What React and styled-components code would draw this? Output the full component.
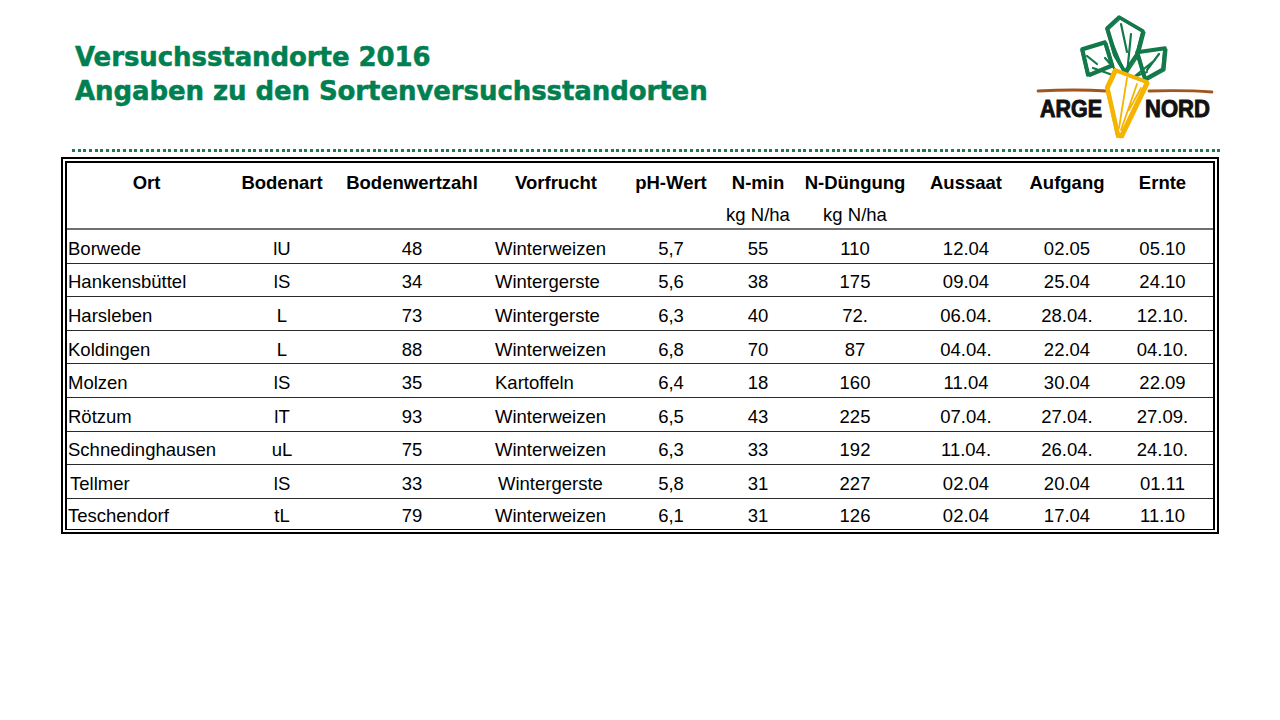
import React from 'react';
import styled, { createGlobalStyle } from 'styled-components';

const GlobalStyle = createGlobalStyle`
  html, body {
    margin: 0;
    padding: 0;
    background: #ffffff;
  }
  * {
    box-sizing: border-box;
  }
`;

const Slide = styled.div`
  width: 1280px;
  height: 720px;
  background: #ffffff;
  font-family: "Liberation Sans", Arial, sans-serif;
  color: #000;
  overflow: hidden;
`;

const Header = styled.div`
  display: flex;
  justify-content: space-between;
  align-items: flex-start;
  height: 149px;
`;

const Title = styled.h1`
  margin: 40px 0 0 75px;
  font-family: "DejaVu Sans", Verdana, sans-serif;
  font-weight: bold;
  font-size: 26px;
  line-height: 34px;
  letter-spacing: -0.08px;
  color: #008050;
  -webkit-text-stroke: 0.5px #008050;
`;

const LogoBox = styled.div`
  margin: 12px 65px 0 0;
  width: 180px;
  height: 130px;
`;

const Divider = styled.div`
  margin-left: 72px;
  width: 1148px;
  height: 3px;
  background: repeating-linear-gradient(to right, #1f7a4c 0 3px, transparent 3px 5.67px);
`;

const Frame = styled.div`
  margin: 5px 0 0 61px;
  width: 1158px;
  border: 2px solid #000;
  padding: 2px;
`;

const Inner = styled.div`
  border: 2px solid #000;
  border-bottom-width: 1px;
`;

const cols = '159px 112px 148px 140px 90px 84px 110px 112px 90px 101px';

const HeadGrid = styled.div`
  display: grid;
  grid-template-columns: ${cols};
  grid-template-rows: 33px 32px;
  height: 67px;
  border-bottom: 2px solid #6f6f6f;
`;

const HeadCell = styled.div`
  display: flex;
  align-items: center;
  justify-content: center;
  padding-top: 6px;
  font-size: 18.5px;
  font-weight: ${(p) => (p.$sub ? 'normal' : 'bold')};
  white-space: nowrap;
`;

const Row = styled.div`
  display: grid;
  grid-template-columns: ${cols};
  height: ${(p) => (p.$last ? '30px' : '33.6px')};
  border-bottom: ${(p) => (p.$last ? 'none' : '1px solid #2a2a2a')};
`;

const Cell = styled.div`
  display: flex;
  align-items: center;
  justify-content: ${(p) => (p.$align === 'left' ? 'flex-start' : 'center')};
  padding-left: ${(p) => p.$pad || 0}px;
  padding-top: 5px;
  font-size: 18.5px;
  white-space: nowrap;
`;

const headers = ['Ort', 'Bodenart', 'Bodenwertzahl', 'Vorfrucht', 'pH-Wert', 'N-min', 'N-Düngung', 'Aussaat', 'Aufgang', 'Ernte'];
const subHeaders = ['', '', '', '', '', 'kg N/ha', 'kg N/ha', '', '', ''];

const rows = [
  ['Borwede', 'lU', '48', 'Winterweizen', '5,7', '55', '110', '12.04', '02.05', '05.10'],
  ['Hankensbüttel', 'lS', '34', 'Wintergerste', '5,6', '38', '175', '09.04', '25.04', '24.10'],
  ['Harsleben', 'L', '73', 'Wintergerste', '6,3', '40', '72.', '06.04.', '28.04.', '12.10.'],
  ['Koldingen', 'L', '88', 'Winterweizen', '6,8', '70', '87', '04.04.', '22.04', '04.10.'],
  ['Molzen', 'lS', '35', 'Kartoffeln', '6,4', '18', '160', '11.04', '30.04', '22.09'],
  ['Rötzum', 'lT', '93', 'Winterweizen', '6,5', '43', '225', '07.04.', '27.04.', '27.09.'],
  ['Schnedinghausen', 'uL', '75', 'Winterweizen', '6,3', '33', '192', '11.04.', '26.04.', '24.10.'],
  [' Tellmer', 'lS', '33', ' Wintergerste', '5,8', '31', '227', '02.04', '20.04', '01.11'],
  ['Teschendorf', 'tL', '79', 'Winterweizen', '6,1', '31', '126', '02.04', '17.04', '11.10'],
];

const GREEN = '#13794a';
const YELLOW = '#f4b400';

// sketchy outline: one heavy stroke plus a lighter offset one
const Sketch = ({ points, color, w = 3.4 }) => (
  <g fill="none" stroke={color} strokeLinejoin="round" strokeLinecap="round">
    <polygon points={points} strokeWidth={w} />
    <polygon points={points} strokeWidth={w * 0.45} transform="translate(1.8 1.3)" />
    <polygon points={points} strokeWidth={w * 0.35} transform="translate(-1.2 0.8)" />
  </g>
);

const Logo = () => (
  <svg width="180" height="130" viewBox="0 0 180 130">
    {/* leaves */}
    <Sketch points="47,37 70,30 77,53 53,63" color={GREEN} />
    <Sketch points="72,16 84,5 108,19 102,42 90,60 80,43" color={GREEN} />
    <Sketch points="102,40 130,36 128,57 110,67" color={GREEN} />
    <path
      d="M58,56 L86,66 M70,46 L86,64 M76,28 L90,62 M96,22 L92,62 M86,12 L92,40 M112,60 L96,66 M120,48 L100,64 M124,42 L112,58 M52,44 L62,52"
      stroke={GREEN} strokeWidth="2.2" fill="none" strokeLinecap="round"
    />
    {/* soil line */}
    <path d="M3,79 Q40,77 72,79" stroke="#a0561c" strokeWidth="2.8" fill="none" strokeLinecap="round" />
    <path d="M114,79 Q150,78 177,80" stroke="#a0561c" strokeWidth="2.8" fill="none" strokeLinecap="round" />
    {/* carrot */}
    <polygon points="80,58 112,70 86,124 72,75" fill="#fff" />
    <Sketch points="80,58 112,70 86,124 83,124 72,75" color={YELLOW} w={4} />
    <path d="M92,66 L84,116 M102,72 L86,118 M106,76 L94,98" stroke={YELLOW} strokeWidth="1.8" fill="none" strokeLinecap="round" />
    {/* text */}
    <text x="5" y="105" fontFamily="Liberation Sans, Arial, sans-serif" fontWeight="bold" fontSize="23"
      textLength="62" lengthAdjust="spacingAndGlyphs" fill="#111" stroke="#111" strokeWidth="0.9">ARGE</text>
    <text x="110" y="105" fontFamily="Liberation Sans, Arial, sans-serif" fontWeight="bold" fontSize="23"
      textLength="65" lengthAdjust="spacingAndGlyphs" fill="#111" stroke="#111" strokeWidth="0.9">NORD</text>
  </svg>
);

export default function App() {
  return (
    <Slide>
      <GlobalStyle />
      <Header>
        <Title>
          Versuchsstandorte 2016
          <br />
          Angaben zu den Sortenversuchsstandorten
        </Title>
        <LogoBox>
          <Logo />
        </LogoBox>
      </Header>
      <Divider />
      <Frame>
        <Inner>
          <HeadGrid>
            {headers.map((h) => (
              <HeadCell key={h}>{h}</HeadCell>
            ))}
            {subHeaders.map((h, i) => (
              <HeadCell key={i} $sub>{h}</HeadCell>
            ))}
          </HeadGrid>
          {rows.map((r, ri) => (
            <Row key={r[0]} $last={ri === rows.length - 1}>
              {r.map((v, ci) => (
                <Cell
                  key={ci}
                  $align={ci === 0 || ci === 3 ? 'left' : 'center'}
                  $pad={ci === 0 ? (v.startsWith(' ') ? 3 : 1) : ci === 3 ? (v.startsWith(' ') ? 12 : 9) : 0}
                >
                  {v.trim()}
                </Cell>
              ))}
            </Row>
          ))}
        </Inner>
      </Frame>
    </Slide>
  );
}
